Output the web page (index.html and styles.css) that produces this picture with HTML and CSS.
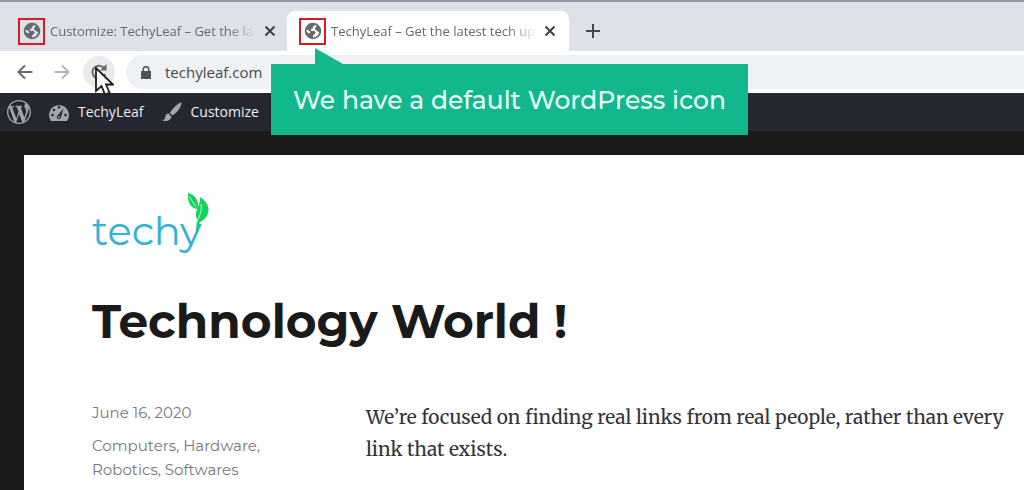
FILE: index.html
```html
<!DOCTYPE html>
<html lang="en">
<head>
<meta charset="utf-8">
<title>TechyLeaf – Get the latest tech updates</title>
<link rel="stylesheet" href="styles.css">
</head>
<body>
<svg class="defs" aria-hidden="true">
  <symbol id="globe" viewBox="0 0 18 18">
    <circle cx="9" cy="9" r="7.4" fill="none" stroke="currentColor" stroke-width="1.8"/>
    <path fill="currentColor" d="M8.500 1.500 10.800 2 10.500 4 8.700 4.800 8.800 6.500 6.800 7.200 7 8.800 10.500 8.900 11.700 10.500 10.500 12.200 9.200 13.200 8.700 16.500C5 16.500 2 13.500 1.700 9.200L5 11.500 6.400 10.800 6 9.500 4.200 8.200 2 7.300C2.600 4 5 1.800 8.500 1.500zM12 4.500 14.500 3.600C16.500 6 16.900 8.500 16.200 11L14 9.400 12.200 8.600 10.800 6.800z"/>
  </symbol>
  <symbol id="close" viewBox="0 0 12 12"><path d="M1.500 1.500l9 9m0-9l-9 9" fill="none" stroke="currentColor" stroke-width="2"/></symbol>
</svg>
<header class="browser">
  <div class="tabs">
    <div class="tab">
      <span class="favicon"><svg><use href="#globe"/></svg></span>
      <span class="tab-title">Customize: TechyLeaf – Get the la</span>
      <button class="close" aria-label="Close tab"><svg><use href="#close"/></svg></button>
    </div>
    <div class="tab active">
      <span class="favicon"><svg><use href="#globe"/></svg></span>
      <span class="tab-title">TechyLeaf – Get the latest tech up</span>
      <button class="close" aria-label="Close tab"><svg><use href="#close"/></svg></button>
    </div>
    <button class="new-tab" aria-label="New tab"><svg viewBox="0 0 14 14"><path d="M7 0v14M0 7h14" stroke="currentColor" stroke-width="2"/></svg></button>
  </div>
  <div class="toolbar">
    <button class="nav" aria-label="Back"><svg viewBox="0 0 16 16"><path d="M15.500 8H2M8 1.500 1.500 8 8 14.500"/></svg></button>
    <button class="nav forward" aria-label="Forward"><svg viewBox="0 0 16 16"><path d="M.5 8H14M8 1.500 14.500 8 8 14.500"/></svg></button>
    <button class="nav reload" aria-label="Reload"><svg viewBox="0 0 16 16"><path d="M13 4A6.500 6.500 0 1 0 14.300 10"/><path class="solid" d="M15.500 0v6.500H9z"/></svg></button>
    <label class="address">
      <svg class="lock" viewBox="0 0 10 13"><path d="M0 5h10v8H0z" fill="currentColor"/><path d="M2.300 5.500V3.500a2.700 2.700 0 0 1 5.400 0v2" fill="none" stroke="currentColor" stroke-width="1.500"/></svg>
      <input type="text" value="techyleaf.com" aria-label="Address">
    </label>
  </div>
  <svg class="cursor" viewBox="0 0 20 30" aria-hidden="true"><path d="M2 1v23l5.500-5 3.500 8.500 4.500-2-3.500-8h7z" fill="#fff" stroke="#1d1d1f" stroke-width="1.800"/></svg>
  <div class="callout">
    <svg class="pointer" viewBox="0 0 28 16" aria-hidden="true"><path d="M0 0 28 16H0z" fill="#12b78e"/></svg>
    We have a default WordPress icon
  </div>
</header>
<nav class="adminbar" aria-label="Admin">
  <a href="#" aria-label="WordPress"><svg class="wp" viewBox="0 0 20 20"><path d="M20 10c0-5.510-4.490-10-10-10C4.480 0 0 4.490 0 10c0 5.520 4.480 10 10 10 5.510 0 10-4.480 10-10zM7.780 15.370L4.370 6.220c.55-.02 1.170-.08 1.170-.08.5-.06.44-1.130-.06-1.110 0 0-1.450.11-2.370.11-.18 0-.37 0-.58-.01C4.120 2.690 6.870 1.110 10 1.110c2.330 0 4.450.87 6.050 2.340-.68-.11-1.650.39-1.650 1.580 0 .74.45 1.360.9 2.100.35.61.55 1.360.55 2.460 0 1.490-1.400 5-1.400 5l-3.030-8.370c.54-.02.82-.17.82-.17.5-.05.44-1.250-.06-1.220 0 0-1.440.12-2.380.12-.87 0-2.330-.12-2.330-.12-.5-.03-.56 1.200-.06 1.220l.92.08 1.260 3.410zM17.410 10c.24-.64.74-1.870.43-4.250.7 1.290 1.050 2.710 1.050 4.250 0 3.290-1.730 6.240-4.400 7.780.97-2.590 1.940-5.200 2.920-7.780zM6.100 18.090C3.120 16.650 1.110 13.530 1.110 10c0-1.300.23-2.480.72-3.590C3.250 10.300 4.670 14.200 6.100 18.090zm4.030-6.630l2.580 6.980c-.86.29-1.760.45-2.710.45-.79 0-1.570-.11-2.290-.33.81-2.380 1.620-4.740 2.420-7.100z"/></svg></a>
  <a href="#"><svg class="gauge" viewBox="0 0 20 17"><path d="M2 17A10 10 0 1 1 18 17z"/><g fill="#24272f"><circle cx="3.500" cy="11" r="1.300"/><circle cx="5" cy="6" r="1.300"/><circle cx="10" cy="3.300" r="1.300"/><circle cx="16.500" cy="11" r="1.300"/><path d="M14.500 4.500 12 13a2.100 2.100 0 1 1-3-2z"/></g><circle cx="10" cy="13" r=".9"/></svg>TechyLeaf</a>
  <a href="#"><svg class="brush" viewBox="0 0 20 20"><path d="M19.500.3C15 2 10 7 8 11l2.500 2.500C15 11 19.500 5 19.500.3zM7 11.500c-2.500 0-3.500 1.500-3.700 3.200C3.100 16.500 2 18 .3 18.500c3.700 1.200 8.200.5 9.200-3.800z"/></svg>Customize</a>
</nav>
<main class="site">
  <article class="page">
    <a class="brand" href="#" aria-label="techy">techy<svg class="leaf" viewBox="0 0 22 38" aria-hidden="true"><path fill="#12d35c" d="M1 0C8 2 12 7 11 16 4 16 0 9 1 0zM13 4c11 7 11 18 2 24l-2 1-3 9-1-1 1-11C6 18 14 14 13 4z"/><path d="M2 3l7 11M14 11c1 6-1 11-4 18" fill="none" stroke="#b6ffd1" stroke-width="1"/></svg></a>
    <h1>Technology World !</h1>
    <div class="post">
      <aside>
        <time datetime="2020-06-16">June 16, 2020</time>
        <p><a href="#">Computers</a>, <a href="#">Hardware</a>, <a href="#">Robotics</a>, <a href="#">Softwares</a></p>
      </aside>
      <p class="copy">We’re focused on finding real links from real people, rather than every link that exists.</p>
    </div>
  </article>
</main>
</body>
</html>
```

FILE: styles.css
```css
* { box-sizing: border-box; }
body { margin: 0; min-height: 100vh; overflow-x: hidden; display: flex; flex-direction: column; background: #1a1a1a; font-family: "Segoe UI", "Open Sans", sans-serif; }
button { border: 0; padding: 0; background: none; color: inherit; display: grid; place-items: center; }
a { color: inherit; text-decoration: none; }
svg { flex: none; display: block; }
.defs { position: absolute; width: 0; height: 0; }

.browser { position: relative; background: #fff; color: #4b4d52; }
.tabs { display: flex; padding-top: 9px; background: #dee1e9; border-top: 2px solid #9696a8; }
.tab { display: flex; align-items: center; width: 282px; height: 40px; padding: 0 12px; }
.tab:first-child { width: 287px; padding: 0 10px 0 18px; }
.active { background: #fff; border-radius: 8px 8px 0 0; }
.favicon { display: grid; place-items: center; width: 27px; height: 27px; border: 2px solid #d51c24; color: #66696e; flex: none; }
.favicon svg { width: 18px; height: 18px; }
.tab-title { flex: 1; margin: 0 5px; white-space: nowrap; font-size: 13px; line-height: 24px; color: #66686e; mask-image: linear-gradient(to right, #000 85%, transparent); }
.close { width: 14px; height: 24px; color: #3d3f44; }
.close svg { width: 12px; height: 12px; }
.new-tab { width: 48px; color: #45474c; }
.new-tab svg { width: 14px; height: 14px; }

.toolbar { display: flex; align-items: center; gap: 5px; height: 42px; padding: 0 0 0 9px; }
.nav { width: 32px; height: 32px; border-radius: 50%; }
.nav svg { width: 16px; height: 16px; fill: none; stroke: #66686c; stroke-width: 2; }
.nav.forward svg { stroke: #b5b6b9; }
.nav.reload { background: #ebebed; }
.nav .solid { fill: #66686c; stroke: none; }
.address { flex: 1; display: flex; align-items: center; gap: 14px; height: 34px; margin-left: 6px; padding-left: 15px; border-radius: 17px 0 0 17px; background: #eff2f4; }
.lock { width: 10px; height: 13px; color: #505257; }
.address input { flex: 1; min-width: 0; padding: 0; border: 0; outline: 0; background: none; font: 15px/24px "Segoe UI", "Open Sans", sans-serif; color: #46484d; }
.cursor { position: absolute; left: 94px; top: 67px; width: 20px; height: 30px; z-index: 2; }
.callout { position: absolute; z-index: 3; left: 271px; top: 64px; width: 477px; height: 71px; display: grid; place-items: center; background: #12b78e; color: #e9fff8; white-space: nowrap; font: 500 25px/32px Montserrat, Inter, sans-serif; }
.pointer { position: absolute; left: 44px; bottom: 100%; width: 28px; height: 16px; }

.adminbar { display: flex; align-items: center; gap: 18px; height: 38px; padding-left: 7px; background: #24272f; color: #eceef1; font-size: 14px; line-height: 24px; }
.adminbar a { display: flex; align-items: center; gap: 9px; }
.adminbar svg { fill: #a2a6ad; }
.wp { width: 24px; height: 24px; }
.gauge { width: 20px; height: 17px; }
.brush { width: 20px; height: 20px; }

.site { flex: 1; display: flex; padding: 24px 0 0 24px; }
.page { flex: 1; padding: 38px 0 0 68px; background: #fff; }
.brand { display: flex; align-items: flex-start; width: max-content; height: 64px; color: #32b2d5; font: 400 40px/76px Montserrat, sans-serif; }
h1 { margin: 37px 0 51px; color: #1a1a1a; font: 700 47px/56px Montserrat, Inter, sans-serif; }
.leaf { width: 22px; height: 38px; margin-left: -15px; }
.post { display: grid; grid-template-columns: 184px 1fr; gap: 90px; padding-bottom: 8px; }
aside { color: #777; font: 15px/24px Montserrat, Inter, sans-serif; }
aside p { margin: 9px 0 0; }
.copy { margin: 0; color: #333338; font: 400 19px/32px Merriweather, "Noto Serif", "Liberation Serif", serif; }
```
